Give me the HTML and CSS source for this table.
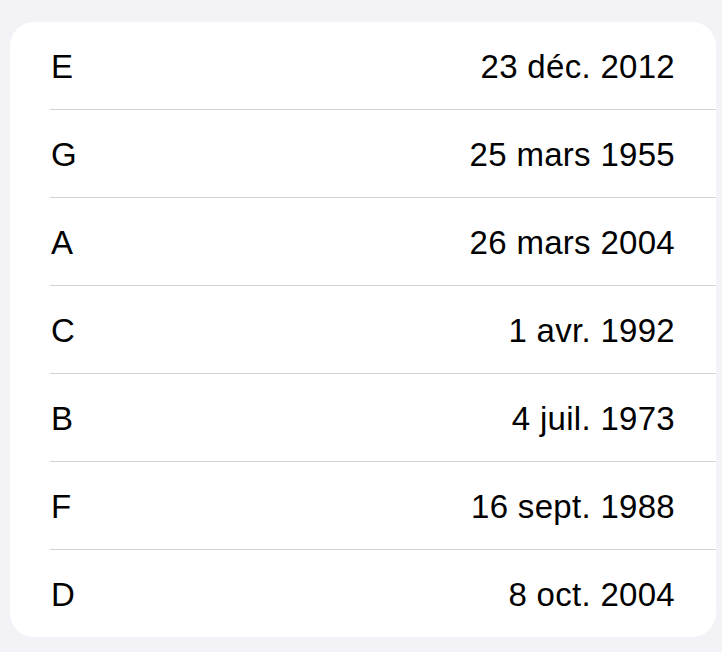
FILE: index.html
```html
<!DOCTYPE html>
<html lang="fr">
<head>
<meta charset="utf-8">
<link rel="stylesheet" href="styles.css">
</head>
<body>
<ul class="list">
  <li class="row"><span class="name">E</span><span class="date">23 déc. 2012</span></li>
  <li class="row"><span class="name">G</span><span class="date">25 mars 1955</span></li>
  <li class="row"><span class="name">A</span><span class="date">26 mars 2004</span></li>
  <li class="row"><span class="name">C</span><span class="date">1 avr. 1992</span></li>
  <li class="row"><span class="name">B</span><span class="date">4 juil. 1973</span></li>
  <li class="row"><span class="name">F</span><span class="date">16 sept. 1988</span></li>
  <li class="row"><span class="name">D</span><span class="date">8 oct. 2004</span></li>
</ul>
</body>
</html>
```
FILE: styles.css
```css
html, body {
  margin: 0;
  padding: 0;
  background: #f2f2f7;
}
body {
  padding: 22px 6px 15px 10px;
  font-family: "Liberation Sans", Arial, sans-serif;
}
.list {
  list-style: none;
  margin: 0;
  padding: 0 0 0 40px;
  background: #ffffff;
  border-radius: 24px;
}
.row {
  display: flex;
  align-items: center;
  justify-content: space-between;
  box-sizing: border-box;
  height: 88px;
  padding: 2px 41px 0 1px;
  font-size: 33px;
  letter-spacing: 0.3px;
  color: #000;
  border-bottom: 1px solid #d4d4d7;
}
.row:last-child {
  height: 87px;
  border-bottom: none;
}
```
